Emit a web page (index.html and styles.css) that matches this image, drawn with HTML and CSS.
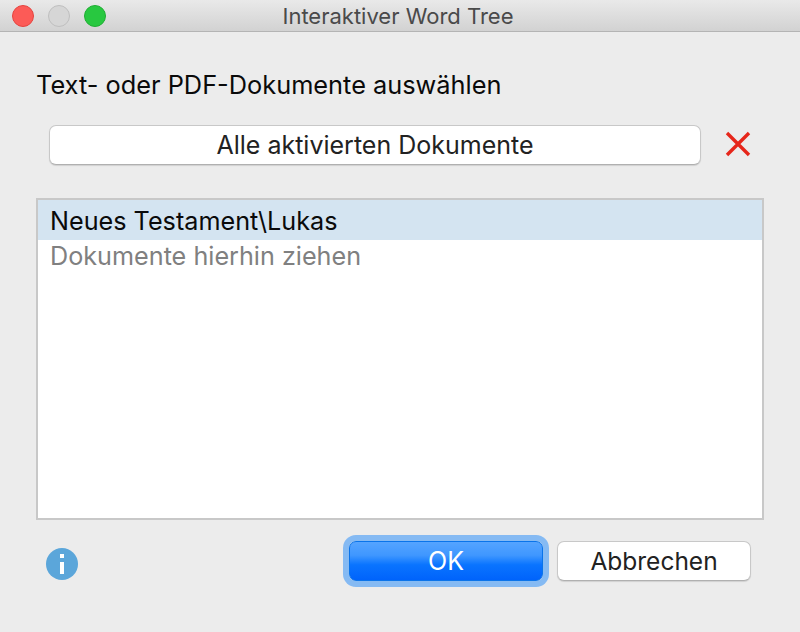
FILE: index.html
```
<!DOCTYPE html>
<html lang="de">
<head>
<meta charset="utf-8">
<title>Interaktiver Word Tree</title>
<link rel="stylesheet" href="styles.css">
</head>
<body>
<div class="window">
  <header class="titlebar">
    <div class="lights">
      <span class="light light-close"></span>
      <span class="light light-min"></span>
      <span class="light light-zoom"></span>
    </div>
    <div class="title">Interaktiver Word Tree</div>
    <div></div>
  </header>
  <main class="content">
    <div class="heading">Text- oder PDF-Dokumente auswählen</div>
    <div class="select-row">
      <button class="btn btn-wide">Alle aktivierten Dokumente</button>
      <svg class="clear" width="26" height="26" viewBox="0 0 26 26"><path d="M2 2 L24 24 M24 2 L2 24" stroke="#e6261a" stroke-width="3.4" fill="none"/></svg>
    </div>
    <div class="list">
      <div class="row row-selected">Neues Testament\Lukas</div>
      <div class="row row-hint">Dokumente hierhin ziehen</div>
    </div>
    <div class="footer">
      <svg class="info" width="32" height="32" viewBox="0 0 32 32"><circle cx="16" cy="16" r="16" fill="#5ba6da"/><rect x="14" y="6" width="4" height="4" fill="#fff"/><rect x="14" y="14" width="4" height="12" fill="#fff"/></svg>
      <div class="actions">
        <button class="btn btn-primary">OK</button>
        <button class="btn btn-cancel">Abbrechen</button>
      </div>
    </div>
  </main>
</div>
</body>
</html>
```
FILE: styles.css
```
* { box-sizing: border-box; }
html, body { margin: 0; padding: 0; }
body {
  width: 800px;
  height: 632px;
  background: #ececec;
  font-family: Inter, "Liberation Sans", sans-serif;
  color: #0a0a0a;
  overflow: hidden;
}
.window { display: flex; flex-direction: column; height: 632px; }
.titlebar {
  height: 32px;
  flex: none;
  display: grid;
  grid-template-columns: 1fr auto 1fr;
  align-items: center;
  background: linear-gradient(#e9e9e9, #d2d2d2);
  border-bottom: 1px solid #b4b4b4;
}
.lights { display: flex; gap: 14px; padding-left: 12px; }
.light { width: 22px; height: 22px; border-radius: 50%; border: 1px solid; }
.light-close { background: #fc5b57; border-color: #e5443f; }
.light-min { background: #d6d6d6; border-color: #bfbfbf; }
.light-zoom { background: #28c840; border-color: #1fae33; }
.title { font-size: 22px; color: #4a4a4a; padding-right: 4px; }
.content { flex: 1; display: flex; flex-direction: column; padding: 0 36px; }
.heading { margin-top: 38px; height: 30px; line-height: 30px; font-size: 25.35px; }
.select-row { display: flex; align-items: center; margin-top: 25px; padding-left: 13px; }
.btn {
  height: 40px;
  border: 1px solid #c8c8c8;
  border-bottom-color: #b0b0b0;
  border-radius: 7px;
  background: #fff;
  font: inherit;
  font-size: 25px;
  color: #222;
  padding: 0;
  box-shadow: 0 1px 1px rgba(0,0,0,.12);
}
.btn-wide { width: 652px; }
.clear { margin-left: 24px; margin-bottom: 2px; }
.list {
  margin-top: 33px;
  height: 322px;
  background: #fff;
  border: 2px solid #c8c8c8;
  font-size: 25.2px;
}
.row { padding-left: 12px; }
.row-selected { height: 40px; line-height: 42px; background: #d4e4f1; }
.row-hint { height: 34px; line-height: 32px; color: #808080; }
.footer { display: flex; align-items: center; justify-content: space-between; margin-top: 21px; padding: 0 13px 0 10px; }
.info { margin-top: 6px; }
.actions { display: flex; gap: 14px; }
.btn-primary {
  width: 194px;
  border: 1px solid #0a74ea;
  color: #fff;
  background: linear-gradient(#55a4ff, #3f97ff 35%, #0a74ff 60%, #0063fb);
  box-shadow: 0 0 0 6px #85baf3;
}
.btn-cancel { width: 194px; font-size: 24.5px; }
```
